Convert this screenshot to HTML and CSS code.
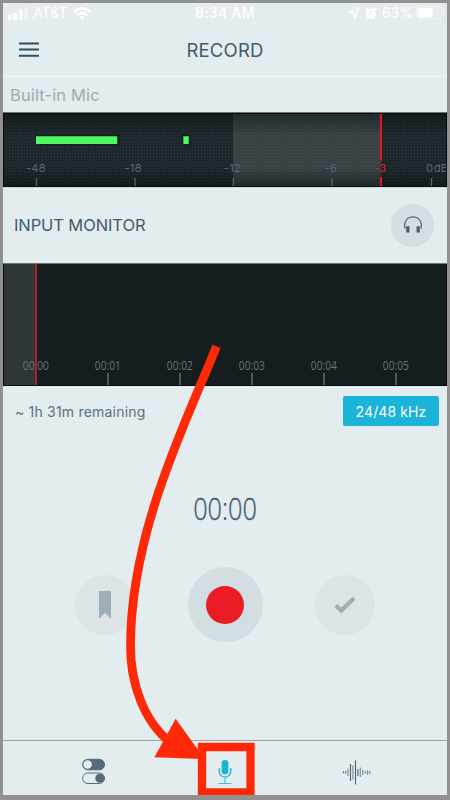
FILE: index.html
```html
<!DOCTYPE html>
<html lang="en">
<head>
<meta charset="utf-8">
<title>Record</title>
<link rel="stylesheet" href="styles.css">
</head>
<body>
<main class="phone">
  <div class="status">
    <div class="carrier">
      <svg width="21" height="14" viewBox="0 0 21 14" fill="#fff"><rect y="9" width="3.5" height="5" rx="1"/><rect x="5" y="7" width="4" height="7" rx="1"/><rect x="11" y="4" width="3.8" height="10" rx="1"/><rect x="16.5" y="1" width="3.5" height="13" rx="1" opacity=".35"/></svg>
      <span class="network">AT&amp;T</span>
      <svg width="18" height="13" viewBox="0 0 18 13" fill="none" stroke="#fff" stroke-width="2.7"><path d="M.9 4.7C5.4.4 12.6.4 17.1 4.7M4 8c2.8-2.6 7.2-2.6 10 0"/><path d="M9 12.7 6 10c1.6-1.5 4.4-1.5 6 0z" fill="#fff" stroke="none"/></svg>
    </div>
    <span class="clock">8:34 AM</span>
    <div class="power">
      <svg width="12" height="12" viewBox="0 0 12 12" fill="none" stroke="#fff" stroke-width="1.2"><path d="M11 1 .9 5.4l5 .7.7 5z"/></svg>
      <svg class="alarm" width="12" height="13" viewBox="0 0 12 13"><g fill="#fff"><circle cx="6" cy="6.8" r="5.1"/><circle cx="2" cy="2" r="1.5"/><circle cx="10" cy="2" r="1.5"/><path d="m2.2 10.5-1 1.8h1.6l1-1zm7.6 0 1 1.8H9.2l-1-1z"/></g><path d="M6 3.7V7H3.4" fill="none" stroke="#e3ecee"/></svg>
      <span class="percent">63%</span>
      <svg width="30" height="14" viewBox="0 0 30 14"><rect x=".6" y=".6" width="25.5" height="12.5" rx="3" fill="none" stroke="#fff" opacity=".5"/><rect x="2" y="2" width="14.5" height="9.5" rx="1.6" fill="#fff"/><path d="M27.5 4.7c1.6.6 1.6 4 0 4.6z" fill="#fff" opacity=".5"/></svg>
    </div>
  </div>
  <header class="header">
    <svg class="menu" width="20" height="16" viewBox="0 0 20 16" fill="#354f61"><path d="M0 .5h20v2H0zM0 6.6h20v2H0zM0 12.8h20v2H0z"/></svg>
    <h1>RECORD</h1>
  </header>
  <div class="source">Built-in Mic</div>
  <svg class="meter" width="444" height="76" viewBox="3 112 444 76">
    <defs>
      <pattern id="dots" width="3" height="3" patternUnits="userSpaceOnUse"><path d="M0 0h1v1H0z" fill="#71828a" opacity=".2"/></pattern>
      <linearGradient id="shade" x2="0" y2="1"><stop stop-color="#050b0d" stop-opacity=".5"/><stop offset=".3" stop-color="#050b0d" stop-opacity="0"/><stop offset=".72" stop-color="#050b0d" stop-opacity="0"/><stop offset="1" stop-color="#050b0d" stop-opacity=".5"/></linearGradient>
    </defs>
    <path d="M3 112h444v76H3z" fill="#1d272b"/>
    <path d="M233 112h148v76H233z" fill="#394145"/>
    <path d="M3 112h444v76H3z" fill="url(#dots)"/>
    <path d="M3 112h444v76H3z" fill="url(#shade)"/>
    <path d="M35 135h83.5v9.5H35zM182.3 135h7.5v9.5h-7.5z" fill="#10141c"/>
    <path d="M36 136.3h81.3v7.7H36zM183.3 136.3h5.5v7.7h-5.5z" fill="#4dfa60"/>
    <path d="M36.5 178v9M135 178v9M233.3 178v9M332 178v9M431.5 178v9" stroke="#54636d" stroke-width="1.3"/>
    <path d="M381 113v47.5M381 177v10" stroke="#e8161b" stroke-width="2"/>
    <g class="levels"><text x="36" y="172.3">-48</text><text x="133.2" y="172.3">-18</text><text x="232.5" y="172.3">-12</text><text x="331" y="172.3">-6</text><text class="peak" x="380.2" y="172.3">-3</text><text class="last" x="426" y="172.3">0<tspan dx="1">dB</tspan></text></g>
    <path d="M3 112.5h444" stroke="#6c7374"/><path d="M3 113.5h444M3 186.5h444M3.5 113v74M446.5 113v74" stroke="#050b0c"/><path d="M3 187.5h444" stroke="#d3dcdd"/>
  </svg>
  <section class="monitor">
    <h2>INPUT MONITOR</h2>
    <div class="headphones"><svg width="18" height="18" viewBox="0 0 18 18"><path d="M1.4 12.7C.5 11.6.6 9 .9 7.5 2.3-1.3 15.7-1.3 17.1 7.5c.3 1.5.4 4.1-.5 5.2" fill="none" stroke="#506675" stroke-width="1.3"/><path d="M2.3 10.3h3.1v6.2H2.3zM12.6 10.3h3.1v6.2h-3.1z" fill="#405868"/></svg></div>
  </section>
  <svg class="timeline" width="444" height="123" viewBox="3 263 444 123">
    <path d="M3 263h444v123H3z" fill="#151d1e"/><path d="M3 264h33v121H3z" fill="#2e3638"/>
    <path d="M108 373v12M180 373v12M252 373v12M324 373v12M396 373v12" stroke="#54636d" stroke-width="1.7"/>
    <g class="times"><text x="22.8" y="370.3" textLength="26.2" lengthAdjust="spacingAndGlyphs">00:00</text><text x="94.8" y="370.3" textLength="26" lengthAdjust="spacingAndGlyphs">00:01</text><text x="166.8" y="370.3" textLength="26" lengthAdjust="spacingAndGlyphs">00:02</text><text x="238.8" y="370.3" textLength="26" lengthAdjust="spacingAndGlyphs">00:03</text><text x="310.8" y="370.3" textLength="26" lengthAdjust="spacingAndGlyphs">00:04</text><text x="382.8" y="370.3" textLength="26" lengthAdjust="spacingAndGlyphs">00:05</text></g>
    <path d="M36.1 264v121" stroke="#bb1e29" stroke-width="1.8"/>
    <path d="M3 263.5h444" stroke="#6c7778"/><path d="M3 385.5h444M3.5 264v122M446.5 264v122" stroke="#050b0c"/>
  </svg>
  <div class="info"><span class="remaining">~ 1h 31m remaining</span><span class="rate">24/48 kHz</span></div>
  <svg class="timer" width="90" height="44" viewBox="0 0 90 44"><text x="13.2" y="34.3" textLength="63.6" lengthAdjust="spacingAndGlyphs">00:00</text></svg>
  <div class="controls">
    <div class="round"><svg width="12" height="28" viewBox="0 0 12 28"><path d="M0 0h12v28l-6-6.2L0 28z" fill="#9faeb7"/></svg></div>
    <div class="record"><div class="dot"></div></div>
    <div class="round"><svg width="22" height="18" viewBox="0 0 22 18"><path d="m2 9.5 5.3 5L20 2.3" fill="none" stroke="#9faeb7" stroke-width="4.2"/></svg></div>
  </div>
  <nav class="tabs">
    <svg width="24" height="26" viewBox="82 758 24 26"><rect x="82.6" y="759.3" width="22" height="10.5" rx="5.25" fill="#566b79" stroke="#566b79"/><circle cx="87.6" cy="764.5" r="4.3" fill="#e3ecee"/><rect x="82.6" y="773" width="22" height="10.5" rx="5.25" fill="none" stroke="#566b79"/><circle cx="99.8" cy="778.2" r="4.5" fill="#566b79"/></svg>
    <svg width="16" height="26" viewBox="217 758 16 26"><rect x="221.6" y="760" width="6.8" height="14.3" rx="3.4" fill="#19b4d8"/><path d="M219.2 768v3.3a5.8 5.8 0 0 0 11.6 0V768" fill="none" stroke="#19b4d8" stroke-width="1.3"/><path d="M225 777v6.5M218.4 783.5h13.2" stroke="#4bbdd9" stroke-width="1.1"/></svg>
    <svg width="30" height="27" viewBox="342 758 30 27" stroke="#4c6273"><path d="M343.5 771.3v2M345.8 771v2.6M350.5 764v17M355.5 760.3v24.2M357.9 769v7M365.2 771.5v1.8M369.9 771.3v2.3" stroke-width="1.1"/><path d="M348 768.5v7.5M352.9 765.5v14M360.3 767.5v9.5M362.7 769.5v5.5M367.5 770v5" stroke="#8798a3" stroke-width="1.3"/></svg>
  </nav>
  <svg class="callout" width="450" height="800" viewBox="0 0 450 800"><path d="M216.5 346.3C188 418 130.5 530 130.5 646C130.5 682 143 721 171 743" fill="none" stroke="#ff2908" stroke-width="8.8"/><path d="m175.7 718.8 26 36.2v4l-47.3-1.8z" fill="#ff2908"/><path d="M202 747h48.5v45.3H202z" fill="none" stroke="#ff2908" stroke-width="8.3"/></svg>
</main>
</body>
</html>
```
FILE: styles.css
```css
* { box-sizing: border-box; }
body { margin: 0; }
svg { display: block; flex: none; }
.phone {
  position: relative;
  width: 450px;
  height: 800px;
  border: 3px solid #919191;
  border-bottom-width: 5px;
  background: #e3ecee;
  color: #435b6b;
  font-family: Inter, "Liberation Sans", sans-serif;
  display: flex;
  flex-direction: column;
  overflow: hidden;
}
.status {
  height: 20px;
  flex: none;
  display: grid;
  grid-template-columns: 1fr auto 1fr;
  align-items: center;
  color: #fff;
  font-size: 14px;
  line-height: 20px;
}
.carrier { display: flex; align-items: center; padding-left: 5px; }
.network { width: 44px; padding-left: 4px; letter-spacing: .1px; }
.clock { font-weight: 500; letter-spacing: .35px; }
.power { display: flex; align-items: center; justify-content: flex-end; padding-right: 1px; }
.alarm { margin-left: 5px; }
.percent { margin: 0 3px 0 5px; }
.header {
  height: 54px;
  flex: none;
  display: grid;
  grid-template-columns: 1fr auto 1fr;
  align-items: center;
  border-bottom: 1px solid #f2f6f7;
}
.menu { margin-left: 16px; }
.header h1 {
  margin: 1px 0 0;
  font-size: 18.5px;
  line-height: 24px;
  font-weight: 400;
  letter-spacing: .2px;
}
.source {
  height: 35px;
  flex: none;
  padding-left: 7px;
  color: #9eabb3;
  font-size: 16.5px;
  line-height: 36px;
  letter-spacing: .13px;
}
.meter, .timeline { overflow: hidden; }
.levels { fill: #586771; font-size: 11px; letter-spacing: .4px; text-anchor: middle; }
.levels .peak { fill: #e31b20; }
.levels .last { text-anchor: start; letter-spacing: 0; }
.monitor {
  height: 75px;
  flex: none;
  display: flex;
  align-items: center;
  justify-content: space-between;
  padding: 0 13px 1px 11px;
}
.monitor h2 { margin: 0; font-size: 16.5px; font-weight: 400; letter-spacing: -.1px; }
.headphones {
  width: 43px;
  height: 43px;
  border-radius: 50%;
  background: #d4dee3;
  display: grid;
  place-items: center;
}
.times { fill: #65747e; font: 12px "Open Sans", sans-serif; }
.info {
  height: 50px;
  flex: none;
  display: flex;
  align-items: center;
  justify-content: space-between;
  padding: 0 8px 0 12px;
  font-size: 14px;
}
.remaining { color: #5c7180; letter-spacing: .2px; }
.rate {
  width: 96px;
  height: 30px;
  border-radius: 2px;
  background: #19b4d8;
  color: #fff;
  text-align: center;
  line-height: 31px;
  letter-spacing: .1px;
}
.timer { align-self: center; margin-top: 50px; }
.timer text { fill: #435b6b; font: 300 30.5px "Open Sans", sans-serif; stroke: #435b6b; stroke-width: .35px; }
.controls {
  flex: none;
  height: 75px;
  margin-top: 37px;
  display: flex;
  align-items: center;
  justify-content: space-between;
  padding: 0 72px;
}
.round, .record { display: grid; place-items: center; border-radius: 50%; }
.round { width: 60px; height: 60px; background: #dce4e6; }
.record { width: 75px; height: 75px; background: #d3dee3; }
.dot { width: 38px; height: 38px; border-radius: 50%; background: #eb1c26; }
.tabs {
  margin-top: auto;
  height: 55px;
  flex: none;
  border-top: 1px solid #9aa5a9;
  display: grid;
  grid-template-columns: 25px 16px 29px;
  justify-content: start;
  column-gap: 109.5px;
  padding: 17px 0 0 79px;
}
.callout { position: absolute; left: -3px; top: -3px; }
```
